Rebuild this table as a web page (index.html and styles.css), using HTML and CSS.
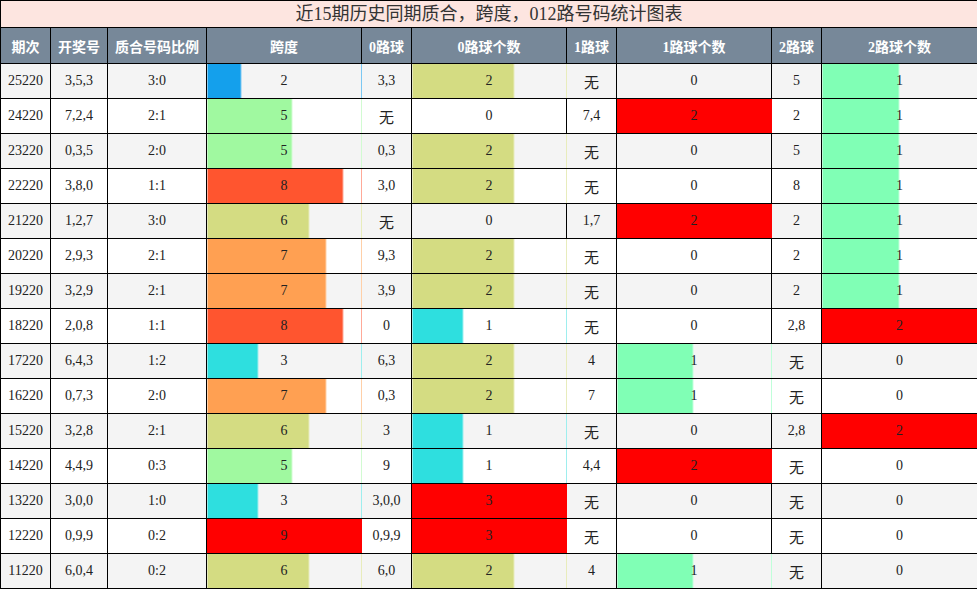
FILE: index.html
```html
<!DOCTYPE html>
<html lang="zh">
<head>
<meta charset="utf-8">
<title>近15期历史同期质合，跨度，012路号码统计图表</title>
<link rel="stylesheet" href="styles.css">
</head>
<body>
<table class="chart">
  <colgroup>
    <col class="c-issue"><col class="c-num"><col class="c-ratio"><col class="c-wide">
    <col class="c-narrow"><col class="c-wide"><col class="c-narrow"><col class="c-wide">
    <col class="c-narrow"><col class="c-last">
  </colgroup>
  <thead>
    <tr><th colspan="10" class="title">近15期历史同期质合，跨度，012路号码统计图表</th></tr>
    <tr class="head">
      <th>期次</th><th>开奖号</th><th>质合号码比例</th><th>跨度</th><th>0路球</th><th>0路球个数</th><th>1路球</th><th>1路球个数</th><th>2路球</th><th>2路球个数</th>
    </tr>
  </thead>
  <tbody>
    <tr><td>25220</td><td>3,5,3</td><td>3:0</td><td class="bar s2" style="--w:22.2%">2</td><td>3,3</td><td class="bar k2" style="--w:66.7%">2</td><td class="cn">无</td><td>0</td><td>5</td><td class="bar last g1" style="--w:50%">1</td></tr>
    <tr><td>24220</td><td>7,2,4</td><td>2:1</td><td class="bar s5" style="--w:55.6%">5</td><td class="cn">无</td><td>0</td><td>7,4</td><td class="bar full g2">2</td><td>2</td><td class="bar last g1" style="--w:50%">1</td></tr>
    <tr><td>23220</td><td>0,3,5</td><td>2:0</td><td class="bar s5" style="--w:55.6%">5</td><td>0,3</td><td class="bar k2" style="--w:66.7%">2</td><td class="cn">无</td><td>0</td><td>5</td><td class="bar last g1" style="--w:50%">1</td></tr>
    <tr><td>22220</td><td>3,8,0</td><td>1:1</td><td class="bar s8" style="--w:88.9%">8</td><td>3,0</td><td class="bar k2" style="--w:66.7%">2</td><td class="cn">无</td><td>0</td><td>8</td><td class="bar last g1" style="--w:50%">1</td></tr>
    <tr><td>21220</td><td>1,2,7</td><td>3:0</td><td class="bar s6" style="--w:66.7%">6</td><td class="cn">无</td><td>0</td><td>1,7</td><td class="bar full g2">2</td><td>2</td><td class="bar last g1" style="--w:50%">1</td></tr>
    <tr><td>20220</td><td>2,9,3</td><td>2:1</td><td class="bar s7" style="--w:77.8%">7</td><td>9,3</td><td class="bar k2" style="--w:66.7%">2</td><td class="cn">无</td><td>0</td><td>2</td><td class="bar last g1" style="--w:50%">1</td></tr>
    <tr><td>19220</td><td>3,2,9</td><td>2:1</td><td class="bar s7" style="--w:77.8%">7</td><td>3,9</td><td class="bar k2" style="--w:66.7%">2</td><td class="cn">无</td><td>0</td><td>2</td><td class="bar last g1" style="--w:50%">1</td></tr>
    <tr><td>18220</td><td>2,0,8</td><td>1:1</td><td class="bar s8" style="--w:88.9%">8</td><td>0</td><td class="bar k1" style="--w:33.3%">1</td><td class="cn">无</td><td>0</td><td>2,8</td><td class="bar last full g2">2</td></tr>
    <tr><td>17220</td><td>6,4,3</td><td>1:2</td><td class="bar s3" style="--w:33.3%">3</td><td>6,3</td><td class="bar k2" style="--w:66.7%">2</td><td>4</td><td class="bar g1" style="--w:50%">1</td><td class="cn">无</td><td>0</td></tr>
    <tr><td>16220</td><td>0,7,3</td><td>2:0</td><td class="bar s7" style="--w:77.8%">7</td><td>0,3</td><td class="bar k2" style="--w:66.7%">2</td><td>7</td><td class="bar g1" style="--w:50%">1</td><td class="cn">无</td><td>0</td></tr>
    <tr><td>15220</td><td>3,2,8</td><td>2:1</td><td class="bar s6" style="--w:66.7%">6</td><td>3</td><td class="bar k1" style="--w:33.3%">1</td><td class="cn">无</td><td>0</td><td>2,8</td><td class="bar last full g2">2</td></tr>
    <tr><td>14220</td><td>4,4,9</td><td>0:3</td><td class="bar s5" style="--w:55.6%">5</td><td>9</td><td class="bar k1" style="--w:33.3%">1</td><td>4,4</td><td class="bar full g2">2</td><td class="cn">无</td><td>0</td></tr>
    <tr><td>13220</td><td>3,0,0</td><td>1:0</td><td class="bar s3" style="--w:33.3%">3</td><td>3,0,0</td><td class="bar full k3">3</td><td class="cn">无</td><td>0</td><td class="cn">无</td><td>0</td></tr>
    <tr><td>12220</td><td>0,9,9</td><td>0:2</td><td class="bar full s9">9</td><td>0,9,9</td><td class="bar full k3">3</td><td class="cn">无</td><td>0</td><td class="cn">无</td><td>0</td></tr>
    <tr><td>11220</td><td>6,0,4</td><td>0:2</td><td class="bar s6" style="--w:66.7%">6</td><td>6,0</td><td class="bar k2" style="--w:66.7%">2</td><td>4</td><td class="bar g1" style="--w:50%">1</td><td class="cn">无</td><td>0</td></tr>
  </tbody>
</table>
</body>
</html>
```

FILE: styles.css
```css
html, body {
  margin: 0;
  padding: 0;
  background: #ffffff;
}

.chart {
  width: 977px;
  border-collapse: collapse;
  table-layout: fixed;
  font-family: "Liberation Serif", "Noto Sans CJK SC", serif;
  font-size: 14px;
  color: #222222;
}

.c-issue { width: 50px; }
.c-num { width: 57px; }
.c-ratio { width: 99px; }
.c-wide { width: 155px; }
.c-narrow { width: 50px; }
.c-last { width: 156px; }

.chart th,
.chart td {
  border: 1px solid #000000;
  padding: 0;
  text-align: center;
  vertical-align: middle;
}

.title {
  height: 26px;
  background: #fde5e0;
  font-weight: normal;
  font-size: 18px;
  color: #333333;
  line-height: 26px;
}

.head th {
  height: 35px;
  background: #778899;
  color: #ffffff;
  font-weight: bold;
  font-size: 14px;
}

.chart td {
  height: 34px;
}

.chart tbody tr:nth-child(odd) td {
  background-color: #f4f4f4;
}

.chart tbody tr:nth-child(even) td {
  background-color: #ffffff;
}

.cn {
  font-size: 15px;
}

.chart tbody td.bar {
  background-image: linear-gradient(to right,
    var(--c) calc(var(--w) - 1.5px),
    var(--e) calc(var(--w) - 1.5px),
    var(--e) calc(var(--w) - 0.5px),
    transparent calc(var(--w) - 0.5px));
  border-right-color: var(--e);
}

.chart tbody tr td.bar.full {
  background-image: none;
  background-color: var(--c);
}

.chart tbody td.bar.last {
  border-right-color: #000000;
}

.s2 { --c: #14a0ec; --e: #7cc8f2; }
.s3 { --c: #2edfdf; --e: #9eeeee; }
.s5 { --c: #a0f9a0; --e: #d2fbd2; }
.s6 { --c: #d4dc82; --e: #e8ecbc; }
.s7 { --c: #ffa052; --e: #ffd0a8; }
.s8 { --c: #ff552f; --e: #ffaa98; }
.s9 { --c: #ff0000; --e: #ff0000; }

.k1 { --c: #2edfdf; --e: #9eeeee; }
.k2 { --c: #d4dc82; --e: #e8ecbc; }
.k3 { --c: #ff0000; --e: #ff0000; }

.g1 { --c: #80ffb5; --e: #c0ffda; }
.g2 { --c: #ff0000; --e: #ff0000; }
```
